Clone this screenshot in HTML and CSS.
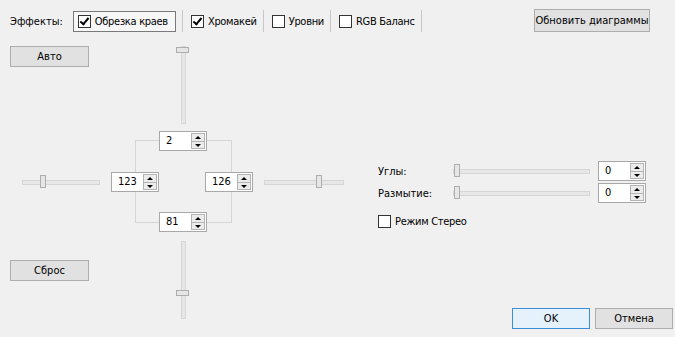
FILE: index.html
```html
<!DOCTYPE html>
<html>

<head lang="ru">
  <meta charset="UTF-8">
  <title>Эффекты</title>
  <link rel="stylesheet" href="styles.css">
</head>

<body>
  <div class="toolbar">
    <span class="toolbar-label">Эффекты:</span>
    <label class="tool tool-pressed"><span class="check check-on"></span>Обрезка краев</label>
    <span class="sep"></span>
    <label class="tool"><span class="check check-on"></span>Хромакей</label>
    <span class="sep"></span>
    <label class="tool"><span class="check"></span>Уровни</label>
    <span class="sep"></span>
    <label class="tool"><span class="check"></span>RGB Баланс</label>
    <span class="sep"></span>
    <button class="btn btn-refresh">Обновить диаграммы</button>
  </div>

  <div class="main">
    <!-- панель обрезки: схема с ползунками -->
    <div class="crop">
      <button class="btn btn-side">Авто</button>
      <button class="btn btn-side btn-reset">Сброс</button>

      <div class="frame"></div>

      <div class="vslider vslider-top"><span class="handle-h"></span></div>
      <div class="vslider vslider-bottom"><span class="handle-h"></span></div>
      <div class="hslider hslider-left"><span class="handle-v"></span></div>
      <div class="hslider hslider-right"><span class="handle-v"></span></div>

      <div class="spin spin-top"><span class="spin-val">2</span><span class="spin-btns"><i class="up"></i><i class="down"></i></span></div>
      <div class="spin spin-left"><span class="spin-val">123</span><span class="spin-btns"><i class="up"></i><i class="down"></i></span></div>
      <div class="spin spin-right"><span class="spin-val">126</span><span class="spin-btns"><i class="up"></i><i class="down"></i></span></div>
      <div class="spin spin-bottom"><span class="spin-val">81</span><span class="spin-btns"><i class="up"></i><i class="down"></i></span></div>
    </div>

    <div class="side">
      <div class="params">
        <span class="param-label">Углы:</span>
        <div class="track"><span class="handle-v"></span></div>
        <div class="spin"><span class="spin-val">0</span><span class="spin-btns"><i class="up"></i><i class="down"></i></span></div>

        <span class="param-label">Размытие:</span>
        <div class="track"><span class="handle-v"></span></div>
        <div class="spin"><span class="spin-val">0</span><span class="spin-btns"><i class="up"></i><i class="down"></i></span></div>
      </div>

      <label class="tool stereo"><span class="check"></span>Режим Стерео</label>

      <div class="actions">
        <button class="btn btn-action btn-default">OK</button>
        <button class="btn btn-action">Отмена</button>
      </div>
    </div>
  </div>
</body>

</html>
```

FILE: styles.css
```css
html,
body {
  margin: 0px;
  padding: 0px;
}

body {
  width: 675px;
  height: 337px;
  overflow: hidden;
  background: #f0f0f0;
  color: #000000;
  font-family: "DejaVu Sans Condensed", "DejaVu Sans", sans-serif;
  font-stretch: semi-condensed;
  font-size: 11px;
}

.toolbar {
  display: flex;
  align-items: center;
  height: 42px;
  padding-left: 10px;
  box-sizing: border-box;
}

.toolbar-label {
  margin-right: 10px;
}

.tool {
  display: flex;
  align-items: center;
  height: 21px;
  white-space: nowrap;
  letter-spacing: -0.3px;
}

.tool-pressed {
  border: 1px solid #7a7a7a;
  background: #f7f7f7;
  padding: 0px 7px 0px 4px;
  box-sizing: border-box;
}

.check {
  width: 13px;
  height: 13px;
  box-sizing: border-box;
  border: 1px solid #333333;
  background: #ffffff;
  margin-right: 4px;
  position: relative;
}

.check-on::after {
  content: "";
  position: absolute;
  left: 3px;
  top: 0px;
  width: 3px;
  height: 7px;
  border: solid #000000;
  border-width: 0px 2px 2px 0px;
  transform: rotate(40deg);
}

.sep {
  width: 1px;
  height: 22px;
  background: #c8c8c8;
  margin: 0px 8px 0px 6px;
}

.btn {
  font-family: "DejaVu Sans Condensed", "DejaVu Sans", sans-serif;
  font-stretch: semi-condensed;
  font-size: 11px;
  color: #000000;
  background: #e1e1e1;
  border: 1px solid #adadad;
  padding: 0px;
  margin: 0px;
  height: 21px;
  white-space: nowrap;
}

.btn-refresh {
  width: 116px;
  height: 23px;
  margin-left: auto;
  margin-right: 25px;
  margin-top: -2px;
}

.main {
  display: flex;
  height: 295px;
}

/* панель обрезки */
.crop {
  position: relative;
  width: 345px;
  display: flex;
  flex-direction: column;
  align-items: flex-start;
  padding: 4px 0px 0px 10px;
  box-sizing: border-box;
}

.btn-side {
  width: 79px;
}

.btn-reset {
  margin-top: 193px;
}

.frame {
  position: absolute;
  left: 135px;
  top: 98px;
  width: 95px;
  height: 81px;
  border: 1px solid #d6d6d6;
}

.vslider {
  position: absolute;
  left: 181px;
  width: 3px;
  background: #e7e7e7;
  border: 1px solid #d6d6d6;
}

.vslider-top {
  top: 4px;
  height: 76px;
}

.vslider-bottom {
  top: 199px;
  height: 76px;
}

.handle-h {
  position: absolute;
  left: -6px;
  width: 11px;
  height: 4px;
  background: #e6e6e6;
  border: 1px solid #adadad;
}

.vslider-top .handle-h {
  top: 0px;
}

.vslider-bottom .handle-h {
  top: 48px;
}

.hslider {
  position: absolute;
  top: 138px;
  height: 3px;
  background: #e7e7e7;
  border: 1px solid #d6d6d6;
}

.hslider-left {
  left: 22px;
  width: 76px;
}

.hslider-right {
  left: 264px;
  width: 78px;
}

.handle-v {
  position: absolute;
  top: -6px;
  width: 4px;
  height: 11px;
  background: #e6e6e6;
  border: 1px solid #adadad;
}

.hslider-left .handle-v {
  left: 17px;
}

.hslider-right .handle-v {
  left: 51px;
}

.spin {
  display: flex;
  width: 48px;
  height: 20px;
  box-sizing: border-box;
  border: 1px solid #a8a8a8;
  background: #ffffff;
}

.crop .spin {
  position: absolute;
}

.spin-top {
  left: 159px;
  top: 89px;
}

.spin-left {
  left: 111px;
  top: 130px;
}

.spin-right {
  left: 205px;
  top: 130px;
}

.spin-bottom {
  left: 159px;
  top: 170px;
}

.spin-val {
  flex: 1;
  padding-left: 6px;
  line-height: 18px;
}

.spin-btns {
  display: flex;
  flex-direction: column;
  width: 14px;
  padding: 1px 1px 1px 0px;
}

.spin-btns i {
  flex: 1;
  position: relative;
  background: #ececec;
  border: 1px solid #b4b4b4;
}

.spin-btns i.down {
  border-top: none;
}

.spin-btns i::after {
  content: "";
  position: absolute;
  left: 3px;
  border-left: 3px solid transparent;
  border-right: 3px solid transparent;
}

.spin-btns i.up::after {
  top: 2px;
  border-bottom: 3px solid #000000;
}

.spin-btns i.down::after {
  top: 2px;
  border-top: 3px solid #000000;
}

/* правая часть */
.side {
  flex: 1;
  display: flex;
  flex-direction: column;
  padding: 119px 0px 0px 33px;
}

.params {
  display: grid;
  grid-template-columns: 67px 137px 48px;
  grid-auto-rows: 20px;
  column-gap: 8px;
  row-gap: 2px;
  align-items: center;
}

.track {
  position: relative;
  height: 3px;
  background: #e7e7e7;
  border: 1px solid #d6d6d6;
}

.track .handle-v {
  left: 0px;
}

.stereo {
  margin-top: 8px;
}

.actions {
  display: flex;
  gap: 5px;
  margin-top: 76px;
  margin-left: 134px;
}

.btn-action {
  width: 78px;
}

.btn-default {
  border-color: #3c8ed8;
  background: #e5f1fb;
}
```
